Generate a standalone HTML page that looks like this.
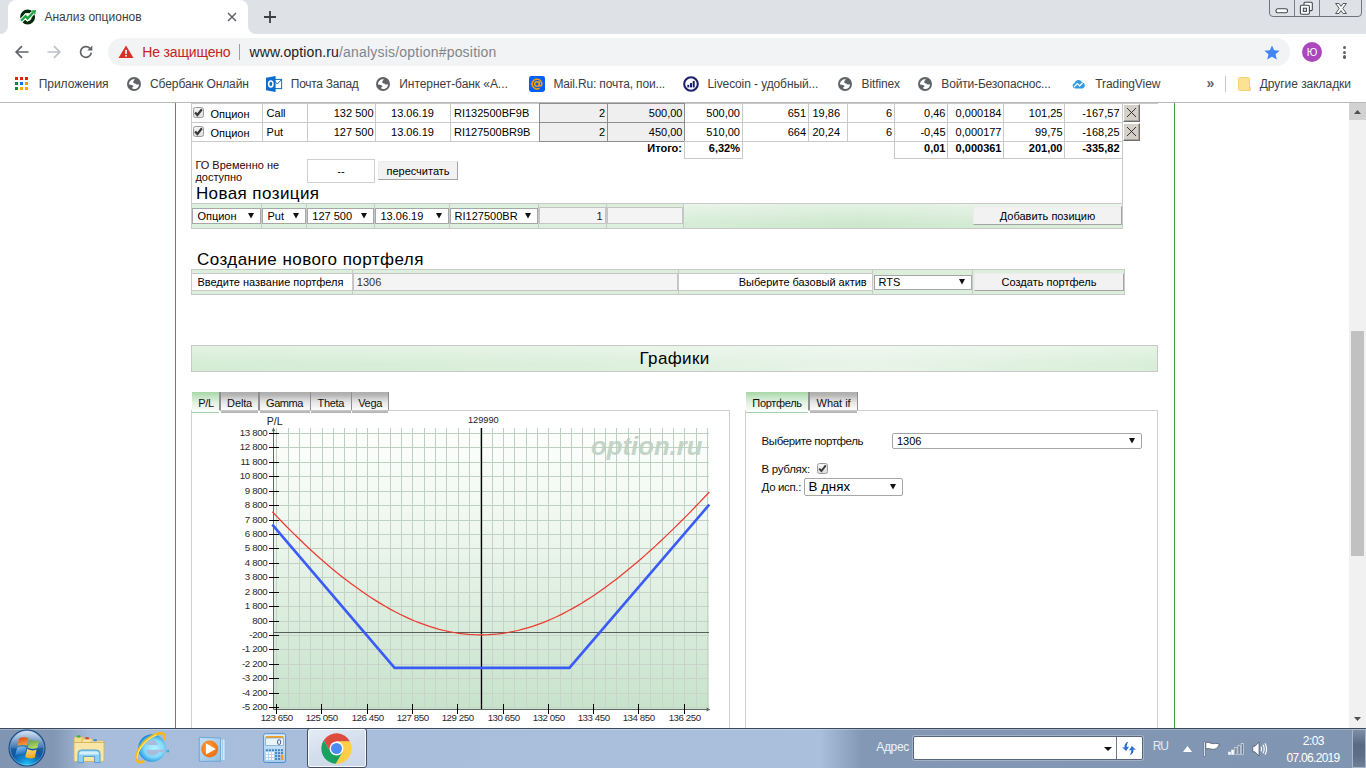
<!DOCTYPE html>
<html lang="ru"><head><meta charset="utf-8"><title>Анализ опционов</title>
<style>
*{box-sizing:border-box;margin:0;padding:0}
html,body{width:1366px;height:768px;overflow:hidden;background:#fff;font-family:"Liberation Sans",sans-serif;}
.a{position:absolute}
#root{position:relative;width:1366px;height:768px;overflow:hidden;background:#fff}
.t{position:absolute;white-space:nowrap;font-family:"Liberation Sans",sans-serif;color:#000}
.r{text-align:right}
.c{text-align:center}
.b{font-weight:bold}
svg{position:absolute;overflow:visible}
/* chrome */
#tabstrip{left:0;top:0;width:1366px;height:34px;background:#dee1e6}
#tab{left:8px;top:0;width:240px;height:34px;background:#fff;border-radius:8px 8px 0 0}
#toolbar{left:0;top:34px;width:1366px;height:68px;background:#fff}
#omni{left:108px;top:38px;width:1182px;height:28px;border-radius:14px;background:#f1f3f4}
#tbline{left:0;top:102px;width:1366px;height:1px;background:#b9b9b9}
.ui{color:#3c4043}
.cb{width:11px;height:11px;border:1px solid #9a9a9a;border-radius:2.5px;background:linear-gradient(180deg,#f6f6f6,#dedede)}
.xb{width:17px;height:18px;background:#d4d0c8;border:1px solid;border-color:#fff #6e6e6e #6e6e6e #fff;box-shadow:inset -1px -1px 0 #a8a49c}
.btn{background:#f2f2f2;border:1px solid;border-color:#ececec #a4a4a4 #a4a4a4 #ececec}
</style></head><body><div id="root">
<!-- ===== page content ===== -->
<div id="page" class="a" style="left:0;top:0;width:1349px;height:728px;overflow:hidden;background:#fff">
<div class="a" style="left:175px;top:103px;width:1px;height:625px;background:#3d9f40"></div>
<div class="a" style="left:1174px;top:103px;width:1px;height:625px;background:#3d9f40"></div>
<div class="a" style="left:191px;top:103px;width:1px;height:126px;background:#c9c9c9"></div>
<div class="a" style="left:1122px;top:103px;width:1px;height:101px;background:#c9c9c9"></div>
<div class="a" style="left:191px;top:103px;width:967px;height:1px;background:#c9c9c9"></div>
<div class="a" style="left:191px;top:122px;width:932px;height:1px;background:#c9c9c9"></div>
<div class="a" style="left:191px;top:141px;width:932px;height:1px;background:#c9c9c9"></div>
<div class="a" style="left:262px;top:103px;width:1px;height:39px;background:#c9c9c9"></div>
<div class="a" style="left:307px;top:103px;width:1px;height:39px;background:#c9c9c9"></div>
<div class="a" style="left:375px;top:103px;width:1px;height:39px;background:#c9c9c9"></div>
<div class="a" style="left:450px;top:103px;width:1px;height:39px;background:#c9c9c9"></div>
<div class="a" style="left:539px;top:103px;width:1px;height:39px;background:#c9c9c9"></div>
<div class="a" style="left:607px;top:103px;width:1px;height:39px;background:#c9c9c9"></div>
<div class="a" style="left:684px;top:103px;width:1px;height:39px;background:#c9c9c9"></div>
<div class="a" style="left:742px;top:103px;width:1px;height:39px;background:#c9c9c9"></div>
<div class="a" style="left:808px;top:103px;width:1px;height:39px;background:#c9c9c9"></div>
<div class="a" style="left:847px;top:103px;width:1px;height:39px;background:#c9c9c9"></div>
<div class="a" style="left:894px;top:103px;width:1px;height:39px;background:#c9c9c9"></div>
<div class="a" style="left:947px;top:103px;width:1px;height:39px;background:#c9c9c9"></div>
<div class="a" style="left:1003px;top:103px;width:1px;height:39px;background:#c9c9c9"></div>
<div class="a" style="left:1064px;top:103px;width:1px;height:39px;background:#c9c9c9"></div>
<div class="a" style="left:539px;top:103px;width:69px;height:20px;background:#efefef;border:1px solid #8e8e8e"></div>
<div class="a" style="left:607px;top:103px;width:78px;height:20px;background:#efefef;border:1px solid #8e8e8e"></div>
<div class="a" style="left:539px;top:122px;width:69px;height:20px;background:#efefef;border:1px solid #8e8e8e"></div>
<div class="a" style="left:607px;top:122px;width:78px;height:20px;background:#efefef;border:1px solid #8e8e8e"></div>
<div class="a" style="left:684px;top:141px;width:59px;height:18px;border:1px solid #c9c9c9;border-top:none"></div>
<div class="a" style="left:894px;top:141px;width:54px;height:18px;border:1px solid #c9c9c9;border-top:none"></div>
<div class="a" style="left:947px;top:141px;width:57px;height:18px;border:1px solid #c9c9c9;border-top:none"></div>
<div class="a" style="left:1003px;top:141px;width:62px;height:18px;border:1px solid #c9c9c9;border-top:none"></div>
<div class="a" style="left:1064px;top:141px;width:59px;height:18px;border:1px solid #c9c9c9;border-top:none"></div>
<div class="a" style="left:894px;top:158px;width:229px;height:1px;background:#c9c9c9"></div>
<div class="a cb" style="left:192.5px;top:107px"></div>
<svg style="left:194px;top:108.3px" width="9" height="9" viewBox="0 0 9 9"><path d="M1.1 4.4 L3.4 7 L7.9 1.3" fill="none" stroke="#383838" stroke-width="2.2"/></svg>
<div class="t " style="top:109.19px;font-size:11px;line-height:11px;left:210.4px;">Опцион</div>
<div class="t " style="top:108.39px;font-size:11px;line-height:11px;left:266.6px;">Call</div>
<div class="t r" style="top:108.39px;font-size:11px;line-height:11px;left:307px;width:66.5px;">132 500</div>
<div class="t c" style="top:108.39px;font-size:11px;line-height:11px;left:375px;width:75px;">13.06.19</div>
<div class="t " style="top:108.39px;font-size:11px;line-height:11px;left:454px;">RI132500BF9B</div>
<div class="t r" style="top:108.39px;font-size:11px;line-height:11px;left:539px;width:66px;">2</div>
<div class="t r" style="top:108.39px;font-size:11px;line-height:11px;left:607px;width:75.5px;">500,00</div>
<div class="t r" style="top:108.39px;font-size:11px;line-height:11px;left:684px;width:56px;">500,00</div>
<div class="t r" style="top:108.39px;font-size:11px;line-height:11px;left:742px;width:64px;">651</div>
<div class="t " style="top:108.39px;font-size:11px;line-height:11px;left:812.5px;">19,86</div>
<div class="t r" style="top:108.39px;font-size:11px;line-height:11px;left:847px;width:45px;">6</div>
<div class="t r" style="top:108.39px;font-size:11px;line-height:11px;left:894px;width:51.5px;">0,46</div>
<div class="t r" style="top:108.39px;font-size:11px;line-height:11px;left:947px;width:54.5px;">0,000184</div>
<div class="t r" style="top:108.39px;font-size:11px;line-height:11px;left:1003px;width:59.5px;">101,25</div>
<div class="t r" style="top:108.39px;font-size:11px;line-height:11px;left:1064px;width:55.5px;">-167,57</div>
<div class="a xb" style="left:1123px;top:104px"></div>
<svg style="left:1127px;top:108px" width="9" height="9" viewBox="0 0 9 9"><path d="M0 0 L9 9 M9 0 L0 9" stroke="#222" stroke-width="0.9" fill="none"/></svg>
<div class="a cb" style="left:192.5px;top:126px"></div>
<svg style="left:194px;top:127.3px" width="9" height="9" viewBox="0 0 9 9"><path d="M1.1 4.4 L3.4 7 L7.9 1.3" fill="none" stroke="#383838" stroke-width="2.2"/></svg>
<div class="t " style="top:128.09px;font-size:11px;line-height:11px;left:210.4px;">Опцион</div>
<div class="t " style="top:127.29px;font-size:11px;line-height:11px;left:266.6px;">Put</div>
<div class="t r" style="top:127.29px;font-size:11px;line-height:11px;left:307px;width:66.5px;">127 500</div>
<div class="t c" style="top:127.29px;font-size:11px;line-height:11px;left:375px;width:75px;">13.06.19</div>
<div class="t " style="top:127.29px;font-size:11px;line-height:11px;left:454px;">RI127500BR9B</div>
<div class="t r" style="top:127.29px;font-size:11px;line-height:11px;left:539px;width:66px;">2</div>
<div class="t r" style="top:127.29px;font-size:11px;line-height:11px;left:607px;width:75.5px;">450,00</div>
<div class="t r" style="top:127.29px;font-size:11px;line-height:11px;left:684px;width:56px;">510,00</div>
<div class="t r" style="top:127.29px;font-size:11px;line-height:11px;left:742px;width:64px;">664</div>
<div class="t " style="top:127.29px;font-size:11px;line-height:11px;left:812.5px;">20,24</div>
<div class="t r" style="top:127.29px;font-size:11px;line-height:11px;left:847px;width:45px;">6</div>
<div class="t r" style="top:127.29px;font-size:11px;line-height:11px;left:894px;width:51.5px;">-0,45</div>
<div class="t r" style="top:127.29px;font-size:11px;line-height:11px;left:947px;width:54.5px;">0,000177</div>
<div class="t r" style="top:127.29px;font-size:11px;line-height:11px;left:1003px;width:59.5px;">99,75</div>
<div class="t r" style="top:127.29px;font-size:11px;line-height:11px;left:1064px;width:55.5px;">-168,25</div>
<div class="a xb" style="left:1123px;top:123px"></div>
<svg style="left:1127px;top:127px" width="9" height="9" viewBox="0 0 9 9"><path d="M0 0 L9 9 M9 0 L0 9" stroke="#222" stroke-width="0.9" fill="none"/></svg>
<div class="t r b" style="top:142.89px;font-size:11px;line-height:11px;left:607px;width:75px;">Итого:</div>
<div class="t r b" style="top:142.89px;font-size:11px;line-height:11px;left:684px;width:56px;">6,32%</div>
<div class="t r b" style="top:142.89px;font-size:11px;line-height:11px;left:894px;width:51.5px;">0,01</div>
<div class="t r b" style="top:142.89px;font-size:11px;line-height:11px;left:947px;width:54.5px;">0,000361</div>
<div class="t r b" style="top:142.89px;font-size:11px;line-height:11px;left:1003px;width:59.5px;">201,00</div>
<div class="t r b" style="top:142.89px;font-size:11px;line-height:11px;left:1064px;width:55.5px;">-335,82</div>
<div class="t " style="top:160.09px;font-size:11px;line-height:11px;left:195.4px;color:#2e0606;">ГО Временно не</div>
<div class="t " style="top:172.29px;font-size:11px;line-height:11px;left:195.4px;color:#2e0606;">доступно</div>
<div class="a" style="left:307px;top:159px;width:68px;height:24px;border:1px solid #cfcfcf;background:#fff"></div>
<div class="t c" style="top:166.29px;font-size:11px;line-height:11px;left:307px;width:68px;">--</div>
<div class="a btn" style="left:378px;top:161px;width:80px;height:19px"></div>
<div class="t c" style="top:165.69px;font-size:11px;line-height:11px;left:378px;width:80px;">пересчитать</div>
<div class="t" style="letter-spacing:0.419px;left:195.9px;top:185.1px;font-size:17px;line-height:17px">Новая позиция</div>
<div class="t" style="letter-spacing:0.447px;left:197px;top:250.5px;font-size:17px;line-height:17px">Создание нового портфеля</div>
<div class="a" style="left:191px;top:203px;width:932px;height:26px;background:#dceedc;border-top:1px solid #c9c9c9;border-bottom:1px solid #c9c9c9"></div>
<div class="a" style="left:684px;top:204px;width:438px;height:24px;background:linear-gradient(180deg,rgba(255,255,255,0.45) 0%,rgba(255,255,255,0) 85%),linear-gradient(90deg,#d6ecd6 0%,#cde7cd 40%,#d6ecd6 75%,#dcefdc 100%)"></div>
<div class="a" style="left:261px;top:203px;width:1px;height:26px;background:#c9c9c9"></div>
<div class="a" style="left:306px;top:203px;width:1px;height:26px;background:#c9c9c9"></div>
<div class="a" style="left:374px;top:203px;width:1px;height:26px;background:#c9c9c9"></div>
<div class="a" style="left:449px;top:203px;width:1px;height:26px;background:#c9c9c9"></div>
<div class="a" style="left:538px;top:203px;width:1px;height:26px;background:#c9c9c9"></div>
<div class="a" style="left:606px;top:203px;width:1px;height:26px;background:#c9c9c9"></div>
<div class="a" style="left:683px;top:203px;width:1px;height:26px;background:#c9c9c9"></div>
<div class="a" style="left:191px;top:203px;width:1px;height:26px;background:#c9c9c9"></div>
<div class="a" style="left:1122px;top:203px;width:1px;height:26px;background:#c9c9c9"></div>
<div class="a" style="left:192px;top:208px;width:69px;height:16px;background:#fff;border:1px solid #a6a6a6;border-radius:0px"></div>
<div class="t " style="top:211.49px;font-size:11px;line-height:11px;left:197.4px;">Опцион</div>
<svg style="left:248.3px;top:212.8px" width="6" height="5.5" viewBox="0 0 6 5.5"><path d="M0 0 H6 L3 5.5 Z" fill="#111"/></svg>
<div class="a" style="left:262px;top:208px;width:44px;height:16px;background:#fff;border:1px solid #a6a6a6;border-radius:0px"></div>
<div class="t " style="top:211.49px;font-size:11px;line-height:11px;left:267.5px;">Put</div>
<svg style="left:293.3px;top:212.8px" width="6" height="5.5" viewBox="0 0 6 5.5"><path d="M0 0 H6 L3 5.5 Z" fill="#111"/></svg>
<div class="a" style="left:307px;top:208px;width:67px;height:16px;background:#fff;border:1px solid #a6a6a6;border-radius:0px"></div>
<div class="t " style="top:211.49px;font-size:11px;line-height:11px;left:312.3px;">127 500</div>
<svg style="left:361.3px;top:212.8px" width="6" height="5.5" viewBox="0 0 6 5.5"><path d="M0 0 H6 L3 5.5 Z" fill="#111"/></svg>
<div class="a" style="left:375px;top:208px;width:74px;height:16px;background:#fff;border:1px solid #a6a6a6;border-radius:0px"></div>
<div class="t " style="top:211.49px;font-size:11px;line-height:11px;left:380.5px;">13.06.19</div>
<svg style="left:436.3px;top:212.8px" width="6" height="5.5" viewBox="0 0 6 5.5"><path d="M0 0 H6 L3 5.5 Z" fill="#111"/></svg>
<div class="a" style="left:450px;top:208px;width:88px;height:16px;background:#fff;border:1px solid #a6a6a6;border-radius:0px"></div>
<div class="t " style="top:211.49px;font-size:11px;line-height:11px;left:454.6px;">RI127500BR</div>
<svg style="left:525.3px;top:212.8px" width="6" height="5.5" viewBox="0 0 6 5.5"><path d="M0 0 H6 L3 5.5 Z" fill="#111"/></svg>
<div class="a" style="left:539px;top:207px;width:67px;height:17px;background:#f4f4f4;border:1px solid #c4c4c4"></div>
<div class="t r" style="top:211.09px;font-size:11px;line-height:11px;left:539px;width:63.5px;color:#222;">1</div>
<div class="a" style="left:607px;top:207px;width:76px;height:17px;background:#f4f4f4;border:1px solid #c4c4c4"></div>
<div class="a btn" style="left:973px;top:206px;width:149px;height:19px"></div>
<div class="t c" style="top:211.29px;font-size:11px;line-height:11px;left:973px;width:149px;">Добавить позицию</div>
<div class="a" style="left:191px;top:269px;width:934px;height:26px;background:#dceedc;border:1px solid #c9c9c9"></div>
<div class="a" style="left:352px;top:269px;width:1px;height:26px;background:#c9c9c9"></div>
<div class="a" style="left:678px;top:269px;width:1px;height:26px;background:#c9c9c9"></div>
<div class="a" style="left:872px;top:269px;width:1px;height:26px;background:#c9c9c9"></div>
<div class="a" style="left:972px;top:269px;width:1px;height:26px;background:#c9c9c9"></div>
<div class="a" style="left:192px;top:273px;width:160px;height:18px;background:#fff;border-top:1px solid #c9c9c9;border-bottom:1px solid #c9c9c9"></div>
<div class="t " style="top:277.09px;font-size:11px;line-height:11px;left:197.4px;">Введите название портфеля</div>
<div class="a" style="left:353px;top:273px;width:325px;height:18px;background:#f4f4f4;border:1px solid #c4c4c4"></div>
<div class="t " style="top:277.09px;font-size:11px;line-height:11px;left:356.8px;color:#333;">1306</div>
<div class="a" style="left:679px;top:273px;width:193px;height:18px;background:#fff;border-top:1px solid #c9c9c9;border-bottom:1px solid #c9c9c9"></div>
<div class="t r" style="top:277.09px;font-size:11px;line-height:11px;left:679px;width:187.7px;">Выберите базовый актив</div>
<div class="a" style="left:874px;top:275px;width:98px;height:15px;background:#fff;border:1px solid #a6a6a6;border-radius:0px"></div>
<div class="t " style="top:277.09px;font-size:11px;line-height:11px;left:878.5px;">RTS</div>
<svg style="left:959.3px;top:279.4px" width="6" height="5.5" viewBox="0 0 6 5.5"><path d="M0 0 H6 L3 5.5 Z" fill="#111"/></svg>
<div class="a btn" style="left:974px;top:273px;width:150px;height:18px"></div>
<div class="t c" style="top:277.29px;font-size:11px;line-height:11px;left:974px;width:150px;">Создать портфель</div>
<div class="a" style="left:191px;top:345px;width:967px;height:27px;background:linear-gradient(180deg,rgba(255,255,255,0.35) 0%,rgba(255,255,255,0) 70%),linear-gradient(90deg,#d5ecd5 0%,#dcefdc 40%,#e8f4e8 70%,#d9eed9 100%);border:1px solid #c6c9c6"></div>
<div class="t c" style="left:191px;width:967px;top:350px;font-size:17px;line-height:17px;letter-spacing:0.35px">Графики</div>
<div class="a" style="left:191px;top:410px;width:539px;height:330px;border:1px solid #d0d0d0;background:#fff"></div>
<div class="a" style="left:745px;top:410px;width:413px;height:330px;border:1px solid #d0d0d0;background:#fff"></div>
<div class="a" style="left:191.6px;top:392px;width:27.400000000000006px;height:19px;background:linear-gradient(180deg,#a6d7a6 0%,#c4e4c4 25%,#e4f3e4 60%,#f6fbf6 100%)"></div>
<div class="a" style="left:191.6px;top:410.3px;width:27.400000000000006px;height:1.2px;background:#fff"></div>
<div class="a" style="left:191.6px;top:411.5px;width:27.400000000000006px;height:1.4px;background:#a5d6a7"></div>
<div class="t" style="letter-spacing:-0.339px;left:198.3px;top:398px;font-size:11px;line-height:11px;color:#111">P/L</div>
<div class="a" style="left:221px;top:392px;width:37px;height:18.4px;background:linear-gradient(180deg,#adadad 0%,#b6b6b6 18%,#d2d2d2 38%,#e6e6e6 58%,#f4f4f4 85%,#fbfbfb 100%)"></div>
<div class="a" style="left:221px;top:410.3px;width:37px;height:2.6px;background:linear-gradient(180deg,#cacaca,#b0b0b0)"></div>
<div class="t" style="letter-spacing:-0.138px;left:227.1px;top:398px;font-size:11px;line-height:11px;color:#111">Delta</div>
<div class="a" style="left:260px;top:392px;width:49.5px;height:18.4px;background:linear-gradient(180deg,#adadad 0%,#b6b6b6 18%,#d2d2d2 38%,#e6e6e6 58%,#f4f4f4 85%,#fbfbfb 100%)"></div>
<div class="a" style="left:260px;top:410.3px;width:49.5px;height:2.6px;background:linear-gradient(180deg,#cacaca,#b0b0b0)"></div>
<div class="t" style="letter-spacing:-0.425px;left:266px;top:398px;font-size:11px;line-height:11px;color:#111">Gamma</div>
<div class="a" style="left:311px;top:392px;width:39.5px;height:18.4px;background:linear-gradient(180deg,#adadad 0%,#b6b6b6 18%,#d2d2d2 38%,#e6e6e6 58%,#f4f4f4 85%,#fbfbfb 100%)"></div>
<div class="a" style="left:311px;top:410.3px;width:39.5px;height:2.6px;background:linear-gradient(180deg,#cacaca,#b0b0b0)"></div>
<div class="t" style="letter-spacing:-0.308px;left:317.6px;top:398px;font-size:11px;line-height:11px;color:#111">Theta</div>
<div class="a" style="left:352px;top:392px;width:36px;height:18.4px;background:linear-gradient(180deg,#adadad 0%,#b6b6b6 18%,#d2d2d2 38%,#e6e6e6 58%,#f4f4f4 85%,#fbfbfb 100%)"></div>
<div class="a" style="left:352px;top:410.3px;width:36px;height:2.6px;background:linear-gradient(180deg,#cacaca,#b0b0b0)"></div>
<div class="t" style="letter-spacing:-0.323px;left:358.2px;top:398px;font-size:11px;line-height:11px;color:#111">Vega</div>
<div class="a" style="left:219.2px;top:392.3px;width:1.6000000000000227px;height:18.2px;background:#8f8f91"></div>
<div class="a" style="left:258.2px;top:392.3px;width:1.6000000000000227px;height:18.2px;background:#8f8f91"></div>
<div class="a" style="left:309.6px;top:392.3px;width:1.3999999999999773px;height:18.2px;background:#8f8f91"></div>
<div class="a" style="left:350.6px;top:392.3px;width:1.3999999999999773px;height:18.2px;background:#8f8f91"></div>
<div class="a" style="left:388px;top:392.3px;width:1.3999999999999773px;height:18.2px;background:#8f8f91"></div>
<div class="a" style="left:745.7px;top:392px;width:62.59999999999991px;height:19px;background:linear-gradient(180deg,#a6d7a6 0%,#c4e4c4 25%,#e4f3e4 60%,#f6fbf6 100%)"></div>
<div class="a" style="left:745.7px;top:410.3px;width:62.59999999999991px;height:1.2px;background:#fff"></div>
<div class="a" style="left:745.7px;top:411.5px;width:62.59999999999991px;height:1.4px;background:#a5d6a7"></div>
<div class="t" style="letter-spacing:-0.311px;left:752.3px;top:398px;font-size:11px;line-height:11px;color:#111">Портфель</div>
<div class="a" style="left:810px;top:392px;width:47px;height:18.4px;background:linear-gradient(180deg,#adadad 0%,#b6b6b6 18%,#d2d2d2 38%,#e6e6e6 58%,#f4f4f4 85%,#fbfbfb 100%)"></div>
<div class="a" style="left:810px;top:410.3px;width:47px;height:2.6px;background:linear-gradient(180deg,#cacaca,#b0b0b0)"></div>
<div class="t" style="letter-spacing:-0.033px;left:816.6px;top:398px;font-size:11px;line-height:11px;color:#111">What if</div>
<div class="a" style="left:808.4px;top:392.3px;width:1.5px;height:18.2px;background:#8f8f91"></div>
<div class="a" style="left:857px;top:392.3px;width:1.3999999999999773px;height:18.2px;background:#8f8f91"></div>
<div class="t" style="letter-spacing:-0.415px;left:761.6px;top:435.4px;font-size:11.5px;line-height:12px;color:#111">Выберите портфель</div>
<div class="a" style="left:892px;top:433px;width:250px;height:16px;background:#fff;border:1px solid #a6a6a6;border-radius:2px"></div>
<div class="t " style="top:435.69px;font-size:11px;line-height:11px;left:897px;">1306</div>
<svg style="left:1129px;top:437.9px" width="6" height="5.5" viewBox="0 0 6 5.5"><path d="M0 0 H6 L3 5.5 Z" fill="#111"/></svg>
<div class="t" style="letter-spacing:-0.308px;left:761.6px;top:462.6px;font-size:11.5px;line-height:12px;color:#111">В рублях:</div>
<div class="a cb" style="left:816.5px;top:462.5px"></div>
<svg style="left:818px;top:464px" width="9" height="9" viewBox="0 0 9 9"><path d="M1.2 4.6 L3.4 7 L7.8 1.4" fill="none" stroke="#3a3a3a" stroke-width="1.9"/></svg>
<div class="t" style="letter-spacing:-0.364px;left:761.6px;top:481.2px;font-size:11.5px;line-height:12px;color:#111">До исп.:</div>
<div class="a" style="left:804px;top:478px;width:99px;height:18px;background:#fff;border:1px solid #a6a6a6;border-radius:2px"></div>
<div class="t " style="top:480.32px;font-size:13.33px;line-height:13.33px;left:808.5px;">В днях</div>
<svg style="left:890px;top:483.9px" width="6" height="5.5" viewBox="0 0 6 5.5"><path d="M0 0 H6 L3 5.5 Z" fill="#111"/></svg>
<!-- ===== chart ===== -->
<div class="a" style="left:274px;top:428px;width:435px;height:281px;background:linear-gradient(180deg,#fdfefd 0%,#eff7f0 35%,#dcedde 65%,#c7e3cb 100%)"></div>
<svg style="left:0;top:0" width="1349" height="728" viewBox="0 0 1349 728">
<text x="591" y="455.2" font-family="Liberation Sans, sans-serif" font-size="25.6" font-weight="bold" font-style="italic" fill="#c4d4c8" textLength="111.5" lengthAdjust="spacingAndGlyphs">option.ru</text>
<defs><linearGradient id="gridg" gradientUnits="userSpaceOnUse" x1="0" y1="428" x2="0" y2="709"><stop offset="0" stop-color="#bbd0bf"/><stop offset="0.5" stop-color="#c2d3c5"/><stop offset="1" stop-color="#cbd4cc"/></linearGradient></defs>
<path d="M276.5 428V709M288.5 428V709M299.5 428V709M310.5 428V709M322.5 428V709M333.5 428V709M344.5 428V709M356.5 428V709M367.5 428V709M378.5 428V709M390.5 428V709M401.5 428V709M412.5 428V709M424.5 428V709M435.5 428V709M446.5 428V709M458.5 428V709M469.5 428V709M480.5 428V709M492.5 428V709M503.5 428V709M514.5 428V709M526.5 428V709M537.5 428V709M548.5 428V709M560.5 428V709M571.5 428V709M582.5 428V709M594.5 428V709M605.5 428V709M616.5 428V709M628.5 428V709M639.5 428V709M650.5 428V709M662.5 428V709M673.5 428V709M684.5 428V709M696.5 428V709M707.5 428V709M274 433.5H709M274 447.5H709M274 462.5H709M274 476.5H709M274 491.5H709M274 505.5H709M274 520.5H709M274 534.5H709M274 548.5H709M274 563.5H709M274 577.5H709M274 592.5H709M274 606.5H709M274 621.5H709M274 635.5H709M274 649.5H709M274 664.5H709M274 678.5H709M274 693.5H709M274 707.5H709" stroke="url(#gridg)" stroke-width="1" fill="none"/>
<path d="M274 632.5H709" stroke="#55605a" stroke-width="1"/>
<path d="M273.5 428V709.5H709" stroke="#5c6b62" stroke-width="1" fill="none"/>
<path d="M271.6 431.2L273.5 427.6L275.4 431.2Z M706.6 707.6L710.4 709.5L706.6 711.4Z" fill="#5c6b62"/>
<path d="M269 433.5H279M269 447.5H279M269 462.5H279M269 476.5H279M269 491.5H279M269 505.5H279M269 520.5H279M269 534.5H279M269 548.5H279M269 563.5H279M269 577.5H279M269 592.5H279M269 606.5H279M269 621.5H279M269 635.5H279M269 649.5H279M269 664.5H279M269 678.5H279M269 693.5H279M269 707.5H279M276.5 704V714M321.5 704V714M367.5 704V714M412.5 704V714M457.5 704V714M503.5 704V714M548.5 704V714M593.5 704V714M638.5 704V714M684.5 704V714" stroke="#000" stroke-width="1" fill="none"/>
<path d="M481.5 428V709" stroke="#000" stroke-width="1.3"/>
<path d="M272.3 511.7 L277.2 516.9 L282.1 522.0 L287.0 527.0 L291.9 531.9 L296.9 536.8 L301.8 541.5 L306.7 546.2 L311.6 550.7 L316.5 555.2 L321.4 559.5 L326.3 563.8 L331.2 567.9 L336.1 572.0 L341.0 575.9 L346.0 579.8 L350.9 583.5 L355.8 587.1 L360.7 590.6 L365.6 594.0 L370.5 597.3 L375.4 600.4 L380.3 603.4 L385.2 606.3 L390.1 609.1 L395.1 611.8 L400.0 614.3 L404.9 616.6 L409.8 618.9 L414.7 621.0 L419.6 622.9 L424.5 624.7 L429.4 626.4 L434.3 627.9 L439.2 629.3 L444.2 630.5 L449.1 631.6 L454.0 632.5 L458.9 633.3 L463.8 633.9 L468.7 634.4 L473.6 634.7 L478.5 634.8 L483.4 634.8 L488.3 634.7 L493.3 634.3 L498.2 633.9 L503.1 633.3 L508.0 632.5 L512.9 631.5 L517.8 630.5 L522.7 629.2 L527.6 627.8 L532.5 626.3 L537.4 624.6 L542.4 622.8 L547.3 620.8 L552.2 618.7 L557.1 616.5 L562.0 614.1 L566.9 611.5 L571.8 608.9 L576.7 606.1 L581.6 603.2 L586.5 600.1 L591.5 597.0 L596.4 593.7 L601.3 590.3 L606.2 586.8 L611.1 583.1 L616.0 579.4 L620.9 575.6 L625.8 571.6 L630.7 567.6 L635.6 563.5 L640.6 559.2 L645.5 554.9 L650.4 550.5 L655.3 546.1 L660.2 541.5 L665.1 536.9 L670.0 532.1 L674.9 527.4 L679.8 522.5 L684.7 517.6 L689.7 512.6 L694.6 507.5 L699.5 502.4 L704.4 497.2 L709.3 492.0" stroke="#ee3a30" stroke-width="1.25" fill="none"/>
<path d="M272.3 524.6 L394.6 667.9 L569.4 667.9 L709.3 504.6" stroke="#3a5bf7" stroke-width="2.6" fill="none" stroke-linejoin="miter"/>
</svg>
<div class="t " style="top:416.43px;font-size:10.6px;line-height:10.6px;left:266.8px;color:#222;">P/L</div>
<div class="t c" style="top:416.41px;font-size:9.2px;line-height:9.2px;left:468px;width:30.5px;color:#222;">129990</div>
<div class="t r" style="top:428.39px;font-size:9.7px;line-height:9.7px;left:217.3px;width:50px;color:#2a2a2a;letter-spacing:-0.35px;">13 800</div>
<div class="t r" style="top:442.39px;font-size:9.7px;line-height:9.7px;left:217.3px;width:50px;color:#2a2a2a;letter-spacing:-0.35px;">12 800</div>
<div class="t r" style="top:457.39px;font-size:9.7px;line-height:9.7px;left:217.3px;width:50px;color:#2a2a2a;letter-spacing:-0.35px;">11 800</div>
<div class="t r" style="top:471.39px;font-size:9.7px;line-height:9.7px;left:217.3px;width:50px;color:#2a2a2a;letter-spacing:-0.35px;">10 800</div>
<div class="t r" style="top:486.39px;font-size:9.7px;line-height:9.7px;left:217.3px;width:50px;color:#2a2a2a;letter-spacing:-0.35px;">9 800</div>
<div class="t r" style="top:500.39px;font-size:9.7px;line-height:9.7px;left:217.3px;width:50px;color:#2a2a2a;letter-spacing:-0.35px;">8 800</div>
<div class="t r" style="top:515.39px;font-size:9.7px;line-height:9.7px;left:217.3px;width:50px;color:#2a2a2a;letter-spacing:-0.35px;">7 800</div>
<div class="t r" style="top:529.39px;font-size:9.7px;line-height:9.7px;left:217.3px;width:50px;color:#2a2a2a;letter-spacing:-0.35px;">6 800</div>
<div class="t r" style="top:543.39px;font-size:9.7px;line-height:9.7px;left:217.3px;width:50px;color:#2a2a2a;letter-spacing:-0.35px;">5 800</div>
<div class="t r" style="top:558.39px;font-size:9.7px;line-height:9.7px;left:217.3px;width:50px;color:#2a2a2a;letter-spacing:-0.35px;">4 800</div>
<div class="t r" style="top:572.39px;font-size:9.7px;line-height:9.7px;left:217.3px;width:50px;color:#2a2a2a;letter-spacing:-0.35px;">3 800</div>
<div class="t r" style="top:587.39px;font-size:9.7px;line-height:9.7px;left:217.3px;width:50px;color:#2a2a2a;letter-spacing:-0.35px;">2 800</div>
<div class="t r" style="top:601.39px;font-size:9.7px;line-height:9.7px;left:217.3px;width:50px;color:#2a2a2a;letter-spacing:-0.35px;">1 800</div>
<div class="t r" style="top:616.39px;font-size:9.7px;line-height:9.7px;left:217.3px;width:50px;color:#2a2a2a;letter-spacing:-0.35px;">800</div>
<div class="t r" style="top:630.39px;font-size:9.7px;line-height:9.7px;left:217.3px;width:50px;color:#2a2a2a;letter-spacing:-0.35px;">-200</div>
<div class="t r" style="top:644.39px;font-size:9.7px;line-height:9.7px;left:217.3px;width:50px;color:#2a2a2a;letter-spacing:-0.35px;">-1 200</div>
<div class="t r" style="top:659.39px;font-size:9.7px;line-height:9.7px;left:217.3px;width:50px;color:#2a2a2a;letter-spacing:-0.35px;">-2 200</div>
<div class="t r" style="top:673.39px;font-size:9.7px;line-height:9.7px;left:217.3px;width:50px;color:#2a2a2a;letter-spacing:-0.35px;">-3 200</div>
<div class="t r" style="top:688.39px;font-size:9.7px;line-height:9.7px;left:217.3px;width:50px;color:#2a2a2a;letter-spacing:-0.35px;">-4 200</div>
<div class="t r" style="top:702.39px;font-size:9.7px;line-height:9.7px;left:217.3px;width:50px;color:#2a2a2a;letter-spacing:-0.35px;">-5 200</div>
<div class="t c" style="top:712.69px;font-size:9.7px;line-height:9.7px;left:251.7px;width:50px;color:#2a2a2a;letter-spacing:-0.42px;">123 650</div>
<div class="t c" style="top:712.69px;font-size:9.7px;line-height:9.7px;left:296.7px;width:50px;color:#2a2a2a;letter-spacing:-0.42px;">125 050</div>
<div class="t c" style="top:712.69px;font-size:9.7px;line-height:9.7px;left:342.7px;width:50px;color:#2a2a2a;letter-spacing:-0.42px;">126 450</div>
<div class="t c" style="top:712.69px;font-size:9.7px;line-height:9.7px;left:387.7px;width:50px;color:#2a2a2a;letter-spacing:-0.42px;">127 850</div>
<div class="t c" style="top:712.69px;font-size:9.7px;line-height:9.7px;left:432.7px;width:50px;color:#2a2a2a;letter-spacing:-0.42px;">129 250</div>
<div class="t c" style="top:712.69px;font-size:9.7px;line-height:9.7px;left:478.7px;width:50px;color:#2a2a2a;letter-spacing:-0.42px;">130 650</div>
<div class="t c" style="top:712.69px;font-size:9.7px;line-height:9.7px;left:523.7px;width:50px;color:#2a2a2a;letter-spacing:-0.42px;">132 050</div>
<div class="t c" style="top:712.69px;font-size:9.7px;line-height:9.7px;left:568.7px;width:50px;color:#2a2a2a;letter-spacing:-0.42px;">133 450</div>
<div class="t c" style="top:712.69px;font-size:9.7px;line-height:9.7px;left:613.7px;width:50px;color:#2a2a2a;letter-spacing:-0.42px;">134 850</div>
<div class="t c" style="top:712.69px;font-size:9.7px;line-height:9.7px;left:659.7px;width:50px;color:#2a2a2a;letter-spacing:-0.42px;">136 250</div>
</div>
<!-- ===== browser chrome ===== -->
<div id="tabstrip" class="a"></div>
<div id="tab" class="a"></div>
<svg style="left:0;top:26px" width="8" height="8"><path d="M0 8 A8 8 0 0 0 8 0 V8 Z" fill="#fff"/></svg>
<svg style="left:248px;top:26px" width="8" height="8"><path d="M8 8 A8 8 0 0 1 0 0 V8 Z" fill="#fff"/></svg>
<!-- favicon -->
<svg style="left:20px;top:9px" width="16" height="16" viewBox="0 0 16 16">
<circle cx="7.6" cy="8" r="5.7" fill="none" stroke="#00290b" stroke-width="3.5"/>
<path d="M0.6 12.2 L5.6 7.2 L7.6 9.6 L13 3.6" fill="none" stroke="#fff" stroke-width="4.4"/>
<path d="M1 11.8 L5.6 7.2 L7.6 9.6 L13 3.6" fill="none" stroke="#18a63a" stroke-width="2.3" stroke-linejoin="miter"/>
<path d="M11.6 1.6 L16 1 L15.3 5.6 Z" fill="#18a63a"/>
</svg>
<div class="t ui" style="letter-spacing:0.023px;left:44.4px;top:11.2px;font-size:12px;line-height:12px;color:#3c4043">Анализ опционов</div>
<!-- tab close / new tab -->
<svg style="left:227px;top:12px" width="10" height="10" viewBox="0 0 10 10"><path d="M1 1 L9 9 M9 1 L1 9" stroke="#5f6368" stroke-width="1.5" fill="none"/></svg>
<svg style="left:264px;top:11px" width="12" height="12" viewBox="0 0 12 12"><path d="M6 0 V12 M0 6 H12" stroke="#3c4043" stroke-width="1.8" fill="none"/></svg>
<!-- window controls -->
<div class="a" style="left:1269px;top:-4px;width:93px;height:21px;border:1px solid #6f737b;border-radius:0 0 4px 4px;background:#dee1e6"></div>
<div class="a" style="left:1294px;top:0;width:1px;height:16px;background:#7a7e86"></div>
<div class="a" style="left:1319px;top:0;width:1px;height:16px;background:#7a7e86"></div>
<svg style="left:1275px;top:8px" width="14" height="6" viewBox="0 0 14 6"><rect x="1" y="0.8" width="11.5" height="4" rx="1.8" fill="#fff" stroke="#43464c" stroke-width="1.1"/></svg>
<svg style="left:1299px;top:1px" width="15" height="14" viewBox="0 0 15 14">
<path d="M5 4 V2.3 Q5 1.3 6 1.3 H12.3 Q13.3 1.3 13.3 2.3 V8.6 Q13.3 9.6 12.3 9.6 H10.6" fill="#fff" stroke="#43464c" stroke-width="1.1"/>
<rect x="1.4" y="4.2" width="9" height="9" rx="1.2" fill="#fff" stroke="#43464c" stroke-width="1.1"/>
<rect x="4.3" y="7.2" width="3.2" height="3.2" fill="#dee1e6" stroke="#43464c" stroke-width="1"/>
</svg>
<svg style="left:1334.5px;top:2.6px" width="12" height="11" viewBox="0 0 12 11">
<path d="M0.6 0.5 H4 L6 3.4 L8 0.5 H11.4 L7.8 5.4 L11.4 10.5 H8 L6 7.5 L4 10.5 H0.6 L4.2 5.4 Z" fill="#fff" stroke="#43464c" stroke-width="0.9" stroke-linejoin="round"/>
</svg>
<!-- toolbar -->
<div id="toolbar" class="a"></div>
<div id="omni" class="a"></div>
<svg style="left:15px;top:45px" width="14" height="14" viewBox="0 0 14 14"><path d="M13.5 7 H1.6 M7 1.2 L1.2 7 L7 12.8" stroke="#5f6368" stroke-width="1.7" fill="none"/></svg>
<svg style="left:47px;top:45px" width="14" height="14" viewBox="0 0 14 14"><path d="M0.5 7 H12.4 M7 1.2 L12.8 7 L7 12.8" stroke="#bdc1c6" stroke-width="1.7" fill="none"/></svg>
<svg style="left:79px;top:45px" width="14" height="14" viewBox="0 0 14 14"><path d="M12.3 7.6 A5.4 5.4 0 1 1 10.9 3.3" stroke="#5f6368" stroke-width="1.7" fill="none"/><path d="M13.3 0.6 V5.6 H8.3 Z" fill="#5f6368"/></svg>
<!-- not secure -->
<svg style="left:118px;top:45px" width="16" height="14" viewBox="0 0 16 14"><path d="M8 0.5 L15.5 13 H0.5 Z" fill="#d93025"/><rect x="7.2" y="4.8" width="1.6" height="4.2" fill="#fff"/><rect x="7.2" y="10" width="1.6" height="1.6" fill="#fff"/></svg>
<div class="t" style="letter-spacing:-0.164px;left:142.3px;top:45.4px;font-size:14px;line-height:14px;color:#c5221f">Не защищено</div>
<div class="a" style="left:239px;top:44px;width:1px;height:16px;background:#9aa0a6"></div>
<div class="t" style="letter-spacing:0.120px;left:249.5px;top:45.4px;font-size:14px;line-height:14px;color:#202124">www.option.ru</div>
<div class="t" style="letter-spacing:0.198px;left:339px;top:45.4px;font-size:14px;line-height:14px;color:#80868b">/analysis/option#position</div>
<!-- star, avatar, menu -->
<svg style="left:1264px;top:45px" width="16" height="15" viewBox="0 0 16 15"><path d="M8 0.4 L10.2 5.3 L15.6 5.8 L11.5 9.3 L12.8 14.5 L8 11.7 L3.2 14.5 L4.5 9.3 L0.4 5.8 L5.8 5.3 Z" fill="#4285f4"/></svg>
<div class="a" style="left:1302px;top:42px;width:20px;height:20px;border-radius:10px;background:#ab47bc"></div>
<div class="t c" style="left:1302px;width:20px;top:47px;font-size:10.5px;line-height:11px;color:#fff">Ю</div>
<div class="a" style="left:1342.5px;top:45.8px;width:3.6px;height:3.6px;border-radius:2px;background:#5f6368"></div>
<div class="a" style="left:1342.5px;top:50.6px;width:3.6px;height:3.6px;border-radius:2px;background:#5f6368"></div>
<div class="a" style="left:1342.5px;top:55.4px;width:3.6px;height:3.6px;border-radius:2px;background:#5f6368"></div>
<!-- ===== bookmarks bar ===== -->
<svg style="left:15px;top:77px" width="13" height="13" viewBox="0 0 13 13"><rect x="0" y="0" width="3" height="3" fill="#ea1d0f"/><rect x="5" y="0" width="3" height="3" fill="#ea1d0f"/><rect x="10" y="0" width="3" height="3" fill="#ea1d0f"/><rect x="0" y="5" width="3" height="3" fill="#0d8a3a"/><rect x="5" y="5" width="3" height="3" fill="#0b72f7"/><rect x="10" y="5" width="3" height="3" fill="#f09d00"/><rect x="0" y="10" width="3" height="3" fill="#0d8a3a"/><rect x="5" y="10" width="3" height="3" fill="#fcab00"/><rect x="10" y="10" width="3" height="3" fill="#fba600"/></svg>
<div class="t ui" style="letter-spacing:-0.032px;left:38.7px;top:77.8px;font-size:12px;line-height:12px">Приложения</div>
<svg style="left:127px;top:77px" width="14" height="14" viewBox="0 0 14 14"><circle cx="7" cy="7" r="7" fill="#5f6368"/><path d="M1.9 7.4 C2 4 4.6 2 7.9 2.2 L6.4 4.2 C5.8 5.5 7 6.5 8.5 6.6 C9 7.9 10.5 7.7 11.9 7.2 C12.1 10 10 12.1 7 12.1 C5.4 12.1 4.9 11 5.2 10.3 C7 10 6.6 8.5 5.5 8.2 C4.5 7.6 3 7.7 1.9 7.4 Z" fill="#fff"/></svg>
<div class="t ui" style="letter-spacing:-0.094px;left:150px;top:77.8px;font-size:12px;line-height:12px">Сбербанк Онлайн</div>
<svg style="left:266px;top:76px" width="16" height="16" viewBox="0 0 16 16"><rect x="7" y="3.4" width="8.6" height="9.2" fill="#fff" stroke="#0a6ed1" stroke-width="1"/><path d="M7.5 4 L11.3 8 L15.2 4" fill="none" stroke="#0a6ed1" stroke-width="1"/><path d="M0 1.8 L9.6 0 V16 L0 14.2 Z" fill="#0a6ed1"/><ellipse cx="4.8" cy="8" rx="2.2" ry="2.9" fill="none" stroke="#fff" stroke-width="1.5"/></svg>
<div class="t ui" style="letter-spacing:-0.270px;left:290.8px;top:77.8px;font-size:12px;line-height:12px">Почта Запад</div>
<svg style="left:376px;top:77px" width="14" height="14" viewBox="0 0 14 14"><circle cx="7" cy="7" r="7" fill="#5f6368"/><path d="M1.9 7.4 C2 4 4.6 2 7.9 2.2 L6.4 4.2 C5.8 5.5 7 6.5 8.5 6.6 C9 7.9 10.5 7.7 11.9 7.2 C12.1 10 10 12.1 7 12.1 C5.4 12.1 4.9 11 5.2 10.3 C7 10 6.6 8.5 5.5 8.2 C4.5 7.6 3 7.7 1.9 7.4 Z" fill="#fff"/></svg>
<div class="t ui" style="letter-spacing:-0.060px;left:399.3px;top:77.8px;font-size:12px;line-height:12px">Интернет-банк «А...</div>
<svg style="left:529px;top:76px" width="16" height="16" viewBox="0 0 16 16"><rect width="16" height="16" rx="2.4" fill="#005ff9"/><circle cx="8" cy="8" r="2.3" fill="none" stroke="#ff9e00" stroke-width="1.5"/><path d="M10.4 5.6 V9 C10.4 10.6 12.9 10.6 12.9 8 A4.9 4.9 0 1 0 10.6 12.2" fill="none" stroke="#ff9e00" stroke-width="1.5"/></svg>
<div class="t ui" style="letter-spacing:-0.159px;left:553.4px;top:77.8px;font-size:12px;line-height:12px">Mail.Ru: почта, пои...</div>
<svg style="left:683px;top:76px" width="16" height="16" viewBox="0 0 16 16"><circle cx="8" cy="8" r="6.8" fill="#fff" stroke="#1b1f6b" stroke-width="2.1"/><rect x="4.3" y="8.8" width="2" height="2.6" fill="#1b1f6b"/><rect x="7" y="7" width="2" height="4.4" fill="#1b1f6b"/><rect x="9.7" y="4.9" width="2" height="6.5" fill="#1b1f6b"/></svg>
<div class="t ui" style="letter-spacing:-0.096px;left:707.5px;top:77.8px;font-size:12px;line-height:12px">Livecoin - удобный...</div>
<svg style="left:838px;top:77px" width="14" height="14" viewBox="0 0 14 14"><circle cx="7" cy="7" r="7" fill="#5f6368"/><path d="M1.9 7.4 C2 4 4.6 2 7.9 2.2 L6.4 4.2 C5.8 5.5 7 6.5 8.5 6.6 C9 7.9 10.5 7.7 11.9 7.2 C12.1 10 10 12.1 7 12.1 C5.4 12.1 4.9 11 5.2 10.3 C7 10 6.6 8.5 5.5 8.2 C4.5 7.6 3 7.7 1.9 7.4 Z" fill="#fff"/></svg>
<div class="t ui" style="letter-spacing:-0.120px;left:861.6px;top:77.8px;font-size:12px;line-height:12px">Bitfinex</div>
<svg style="left:918px;top:77px" width="14" height="14" viewBox="0 0 14 14"><circle cx="7" cy="7" r="7" fill="#5f6368"/><path d="M1.9 7.4 C2 4 4.6 2 7.9 2.2 L6.4 4.2 C5.8 5.5 7 6.5 8.5 6.6 C9 7.9 10.5 7.7 11.9 7.2 C12.1 10 10 12.1 7 12.1 C5.4 12.1 4.9 11 5.2 10.3 C7 10 6.6 8.5 5.5 8.2 C4.5 7.6 3 7.7 1.9 7.4 Z" fill="#fff"/></svg>
<div class="t ui" style="letter-spacing:-0.163px;left:941.3px;top:77.8px;font-size:12px;line-height:12px">Войти-Безопаснос...</div>
<svg style="left:1072px;top:79px" width="14" height="10" viewBox="0 0 14 10"><path d="M3.2 9.4 A2.7 2.7 0 0 1 2.6 4.1 A3.9 3.9 0 0 1 9.9 3.2 A3.2 3.2 0 0 1 10.8 9.4 Z" fill="#2f9bea"/><path d="M2 8 L5.4 4.6 L7.6 6.8 L10.6 4" fill="none" stroke="#fff" stroke-width="1.3"/></svg>
<div class="t ui" style="letter-spacing:-0.095px;left:1095.3px;top:77.8px;font-size:12px;line-height:12px">TradingView</div>
<div class="t" style="left:1206.5px;top:75.5px;font-size:14px;line-height:14px;color:#5f6368;font-weight:bold">»</div>
<div class="a" style="left:1225px;top:76px;width:1px;height:16px;background:#c4c7cc"></div>
<svg style="left:1238px;top:77px" width="13" height="14" viewBox="0 0 13 14"><path d="M0.5 1.6 Q0.5 0.5 1.6 0.5 H10.4 Q11.5 0.5 11.5 1.6 V10.5 H12.5 V13.5 H1.6 Q0.5 13.5 0.5 12.4 Z" fill="#fde293" stroke="#f6c85f" stroke-width="0.8"/></svg>
<div class="t ui" style="letter-spacing:-0.044px;left:1259.7px;top:77.8px;font-size:12px;line-height:12px">Другие закладки</div>
<div id="tbline" class="a"></div>
<!-- ===== scrollbar ===== -->
<div class="a" style="left:1349px;top:103px;width:17px;height:625px;background:#f1f1f1"></div>
<div class="a" style="left:1349px;top:103px;width:17px;height:17px;background:#d2d2d2"></div>
<svg style="left:1354px;top:110px" width="7" height="4" viewBox="0 0 7 4"><path d="M0 4 L3.5 0 L7 4 Z" fill="#505050"/></svg>
<svg style="left:1354px;top:717px" width="7" height="4" viewBox="0 0 7 4"><path d="M0 0 L3.5 4 L7 0 Z" fill="#505050"/></svg>
<div class="a" style="left:1351px;top:331px;width:13px;height:225px;background:#c1c1c1"></div>
<!-- ===== windows taskbar ===== -->
<div class="a" style="left:0;top:728px;width:1366px;height:40px;background:linear-gradient(90deg,#8095b1 0px,#8297b3 54px,#a7bddb 90px,#a9bfdc 820px,#8398b4 862px,#8095b1 1366px)"></div>
<div class="a" style="left:0;top:728px;width:1366px;height:1px;background:#3d4a5e"></div>
<div class="a" style="left:0;top:729px;width:1366px;height:1px;background:rgba(255,255,255,0.28)"></div>
<!-- start orb -->
<svg style="left:8px;top:729px" width="38" height="38" viewBox="0 0 38 38">
<defs><radialGradient id="orb" cx="50%" cy="100%" r="95%"><stop offset="0" stop-color="#22d4fb"/><stop offset="0.22" stop-color="#1590d6"/><stop offset="0.5" stop-color="#0f559b"/><stop offset="0.8" stop-color="#2c68a6"/><stop offset="1" stop-color="#5d8cc0"/></radialGradient>
<linearGradient id="orbhl" x1="0" y1="0" x2="0" y2="1"><stop offset="0" stop-color="#e4eef8" stop-opacity="0.85"/><stop offset="1" stop-color="#cfe0f2" stop-opacity="0.12"/></linearGradient>
<linearGradient id="fr" x1="0" y1="0" x2="0.3" y2="1"><stop offset="0" stop-color="#e2411c"/><stop offset="1" stop-color="#f6a02a"/></linearGradient>
<linearGradient id="fg" x1="0" y1="0" x2="0.3" y2="1"><stop offset="0" stop-color="#5f9e3c"/><stop offset="1" stop-color="#b4d86a"/></linearGradient>
<linearGradient id="fb" x1="0" y1="0" x2="0.3" y2="1"><stop offset="0" stop-color="#8cc8f2"/><stop offset="1" stop-color="#1f6fc0"/></linearGradient>
<linearGradient id="fy" x1="0" y1="0" x2="0.3" y2="1"><stop offset="0" stop-color="#fde27a"/><stop offset="1" stop-color="#f7a51c"/></linearGradient></defs>
<circle cx="19" cy="19" r="18" fill="url(#orb)" stroke="#1b4c84" stroke-width="1.1"/>
<circle cx="19" cy="19" r="16.9" fill="none" stroke="#a9c6e6" stroke-opacity="0.55" stroke-width="0.8"/>
<path d="M2.6 18.5 A16.4 16.4 0 0 1 35.4 18.5 Q19 22.5 2.6 18.5 Z" fill="url(#orbhl)"/>
<path d="M10.9 9.6 Q15.4 7.2 20.6 9.1 L19.2 16.6 Q14.4 14.8 9.6 17.1 Z" fill="url(#fr)"/>
<path d="M21.3 10.4 Q26 13 31.1 10.9 L29.4 18.8 Q24.6 21 19.9 18.4 Z" fill="url(#fg)"/>
<path d="M9.2 18.8 Q13.8 16.4 18.5 18.4 L17 26.3 Q12 24.2 7 26.6 Z" fill="url(#fb)"/>
<path d="M19.3 20 Q24 22.6 28.6 20.5 L26.8 28.6 Q22 30.6 17.2 28 Z" fill="url(#fy)"/>
</svg>
<!-- explorer -->
<svg style="left:73px;top:734px" width="32" height="30" viewBox="0 0 32 30">
<path d="M1 4.5 Q1 3 2.5 3 H10 L12 5.5 H16 V9 H1 Z" fill="#f3dc8e" stroke="#cfae55" stroke-width="0.8"/>
<path d="M9 6 Q9 4.8 10.4 4.8 H19 L21 7.2 H24 V10 H9 Z" fill="#f6e4a4" stroke="#cfae55" stroke-width="0.8"/>
<path d="M18 8 Q18 6.8 19.4 6.8 H29.6 Q31 6.8 31 8 V11 H18 Z" fill="#f8ecbb" stroke="#cfae55" stroke-width="0.8"/>
<rect x="4" y="1.4" width="3.4" height="2" fill="#2fb344"/><rect x="12.4" y="3.2" width="3.4" height="2" fill="#e03a2e"/><rect x="20.4" y="5.2" width="3.4" height="2" fill="#2f8ae6"/>
<path d="M1 8.5 H31 V26 Q31 27.5 29.5 27.5 H2.5 Q1 27.5 1 26 Z" fill="#f7e6a6" stroke="#d4b25c" stroke-width="0.9"/>
<path d="M5 28.6 V19.4 Q5 16 8.6 16 H23.4 Q27 16 27 19.4 V28.6 H21.6 V22.4 H10.4 V28.6 Z" fill="#8fd0f2" stroke="#4f9fd6" stroke-width="1"/>
<path d="M6.4 19.4 Q6.4 17.4 8.6 17.4 H23.4 Q25.6 17.4 25.6 19.4 V20.4 H6.4 Z" fill="#d5effc"/>
</svg>
<!-- IE -->
<svg style="left:136px;top:731px" width="32" height="32" viewBox="0 0 32 32">
<defs><radialGradient id="ieg" cx="52%" cy="52%" r="52%"><stop offset="0" stop-color="#b9f3fe"/><stop offset="0.6" stop-color="#82daf9"/><stop offset="0.9" stop-color="#3aa6e7"/><stop offset="1" stop-color="#1f86d6"/></radialGradient></defs>
<path fill-rule="evenodd" fill="url(#ieg)" d="M16 3.2 A13.8 13.8 0 1 1 15.99 3.2 Z M10.2 14.1 C10.4 10.8 12.8 9 16 9 C19.2 9 21.6 10.8 21.8 14.1 Z M10.2 18.8 H33 V21.3 H22.6 C21.5 23.6 19.2 24.8 16 24.8 C12.6 24.8 10.4 22.4 10.2 18.8 Z"/>
<path d="M7.4 30.2 C4.6 32 1.4 31.6 0.6 28.6 C-0.2 24.6 1.6 20.4 4.4 16 C8 10.6 13.6 6 20.4 3.2 C24.4 1.6 27.6 2 28.4 4.4 C28.8 5.6 28.6 7 28.2 8.2" fill="none" stroke="#f8b90f" stroke-width="2.6" stroke-linecap="round"/>
<path d="M1.2 27 C1 23.6 2.6 20 5 16.4 C8.6 11 13.8 6.8 20.2 3.9" fill="none" stroke="#ffe680" stroke-width="1.1" stroke-linecap="round"/>
</svg>
<!-- media player -->
<svg style="left:198px;top:736px" width="28" height="27" viewBox="0 0 28 27">
<defs><linearGradient id="wmpf" x1="0" y1="0" x2="1" y2="1"><stop offset="0" stop-color="#c4e0f5"/><stop offset="1" stop-color="#8fc0e6"/></linearGradient>
<radialGradient id="wmpo" cx="40%" cy="35%" r="75%"><stop offset="0" stop-color="#fb9a3a"/><stop offset="1" stop-color="#ef6a0a"/></radialGradient></defs>
<path d="M19 2.4 L27 3 V24.4 L19 25 Z" fill="#d9ecf9" stroke="#8bb8de" stroke-width="0.7"/>
<path d="M24.6 3 V24.4 M22.6 2.8 V24.8" stroke="#8bb8de" stroke-width="0.7"/>
<path d="M1.3 1.3 L22.6 2 V25.2 L1.3 25.4 Z" fill="url(#wmpf)" stroke="#6aa3d4" stroke-width="0.9"/>
<circle cx="11.7" cy="12.9" r="8.5" fill="url(#wmpo)"/>
<path d="M7.9 7.2 L17.9 12.9 L7.9 18.6 Z" fill="#fff"/>
</svg>
<!-- calculator -->
<svg style="left:263px;top:733px" width="24" height="30" viewBox="0 0 24 30">
<defs><linearGradient id="calb" x1="0" y1="0" x2="0" y2="1"><stop offset="0" stop-color="#dcedfa"/><stop offset="1" stop-color="#a3cbec"/></linearGradient></defs>
<rect x="0.6" y="0.7" width="22" height="28.8" rx="1.8" fill="url(#calb)" stroke="#4f8fcd" stroke-width="1"/>
<rect x="2.7" y="3" width="17.7" height="2" fill="#f6a21e"/>
<rect x="2.7" y="5" width="17.7" height="7.6" fill="#eaf4fc" stroke="#6fa1cf" stroke-width="0.7"/>
<rect x="14.6" y="6.8" width="3" height="4.6" rx="1.3" fill="none" stroke="#4b5f96" stroke-width="1"/>
<rect x="2.85" y="16.20" width="2.1" height="2" fill="#3f86c8"/><rect x="5.85" y="16.20" width="2.1" height="2" fill="#3f86c8"/><rect x="8.85" y="16.20" width="2.1" height="2" fill="#3f86c8"/><rect x="11.95" y="16.20" width="2.1" height="2" fill="#3f86c8"/><rect x="14.95" y="16.20" width="2.1" height="2" fill="#3f86c8"/><rect x="17.95" y="16.20" width="2.1" height="2" fill="#3f86c8"/><rect x="2.85" y="19.10" width="2.1" height="2" fill="#fdfdfd"/><rect x="5.85" y="19.10" width="2.1" height="2" fill="#fdfdfd"/><rect x="8.85" y="19.10" width="2.1" height="2" fill="#fdfdfd"/><rect x="11.95" y="19.10" width="2.1" height="2" fill="#3f86c8"/><rect x="14.95" y="19.10" width="2.1" height="2" fill="#3f86c8"/><rect x="17.95" y="19.10" width="2.1" height="2" fill="#3f86c8"/><rect x="2.85" y="22.00" width="2.1" height="2" fill="#fdfdfd"/><rect x="5.85" y="22.00" width="2.1" height="2" fill="#fdfdfd"/><rect x="8.85" y="22.00" width="2.1" height="2" fill="#fdfdfd"/><rect x="11.95" y="22.00" width="2.1" height="2" fill="#3f86c8"/><rect x="14.95" y="22.00" width="2.1" height="2" fill="#3f86c8"/><rect x="2.85" y="24.90" width="2.1" height="2" fill="#fdfdfd"/><rect x="5.85" y="24.90" width="2.1" height="2" fill="#fdfdfd"/><rect x="8.85" y="24.90" width="2.1" height="2" fill="#fdfdfd"/><rect x="11.95" y="24.90" width="2.1" height="2" fill="#3f86c8"/><rect x="14.95" y="24.90" width="2.1" height="2" fill="#3f86c8"/><rect x="17.9" y="22" width="2.2" height="4.9" fill="#f59a12"/>
</svg>
<!-- chrome active button -->
<div class="a" style="left:307px;top:728px;width:60px;height:40px;border:1px solid #414e63;border-radius:3px;background:linear-gradient(160deg,#e4ecf6 0%,#d3deed 50%,#c9d6e8 100%);box-shadow:inset 0 0 0 1px rgba(255,255,255,0.85)"></div>
<svg style="left:321.2px;top:732.7px" width="31" height="31" viewBox="0 0 31 31">
<path d="M15.5 8.6 L29.04 8.6 A15.2 15.2 0 0 0 2.76 7.22 L9.52 18.95 Z" fill="#dd4b3e"/>
<path d="M21.48 18.95 L14.7 30.68 A15.2 15.2 0 0 0 29.04 8.6 L15.5 8.6 Z" fill="#ffce42"/>
<path d="M9.52 18.95 L2.76 7.22 A15.2 15.2 0 0 0 14.7 30.68 L21.48 18.95 Z" fill="#19a15f"/>
<circle cx="15.5" cy="15.5" r="6.9" fill="#fff"/>
<circle cx="15.5" cy="15.5" r="5.5" fill="#4c8bf5"/>
</svg>
<!-- address toolbar -->
<div class="t" style="letter-spacing:-0.292px;left:876.2px;top:741.3px;font-size:12px;line-height:12px;color:#edf2f8">Адрес</div>
<div class="a" style="left:913px;top:736px;width:230px;height:24px;background:#fff;border:1px solid #56657c;border-radius:2px;box-shadow:0 0 0 1px rgba(255,255,255,0.25)"></div>
<div class="a" style="left:1116px;top:737px;width:1px;height:22px;background:#6f7d92"></div>
<svg style="left:1104px;top:747px" width="8" height="4" viewBox="0 0 8 4"><path d="M0 0 H8 L4 4 Z" fill="#111"/></svg>
<svg style="left:1121px;top:741px" width="16" height="15" viewBox="0 0 16 15">
<path d="M7.4 0.6 C4.4 1.6 3 4 3.6 6.4 L1 6.2 L5.2 10 L8 5.6 L5.8 6 C5.6 4 6.4 2 7.4 0.6 Z" fill="#2b6fd6"/>
<path d="M8.6 14.4 C11.6 13.4 13 11 12.4 8.6 L15 8.8 L10.8 5 L8 9.4 L10.2 9 C10.4 11 9.6 13 8.6 14.4 Z" fill="#2b6fd6"/>
</svg>
<div class="t" style="letter-spacing:-1.222px;left:1152.7px;top:739.9px;font-size:12px;line-height:12px;color:#e3eaf3">RU</div>
<svg style="left:1183px;top:746px" width="9" height="6" viewBox="0 0 9 6"><path d="M0 6 L4.5 0 L9 6 Z" fill="#fff"/></svg>
<!-- flag -->
<svg style="left:1203px;top:741px" width="18" height="16" viewBox="0 0 18 16">
<rect x="0.8" y="0.6" width="1.7" height="15" rx="0.8" fill="#fff" stroke="#3f4d63" stroke-width="0.6"/>
<path d="M2.8 1.6 C6 0.2 8 3.4 11.4 2.6 C13.4 2.2 14.6 2.6 16.6 3.4 C15 5 14.4 7.6 11.6 8.2 C8.4 9 6 6.4 2.8 8 Z" fill="#fff" stroke="#3f4d63" stroke-width="0.7"/>
</svg>
<!-- signal -->
<svg style="left:1228px;top:743px" width="16" height="12" viewBox="0 0 16 12">
<g stroke="#e8eef6" stroke-width="0.6"><rect x="0.4" y="9" width="2.2" height="2.6" fill="#fff"/><rect x="3.6" y="7" width="2.2" height="4.6" fill="#fff"/><rect x="6.8" y="4.6" width="2.2" height="7" fill="#6f7d90"/><rect x="10" y="2.4" width="2.2" height="9.2" fill="#6f7d90"/><rect x="13.2" y="0.4" width="2.2" height="11.2" fill="#6f7d90"/></g>
</svg>
<!-- speaker -->
<svg style="left:1252px;top:741px" width="16" height="16" viewBox="0 0 16 16">
<path d="M0.8 5.2 H3 L7 1 V15 L3 10.8 H0.8 Z" fill="#fff" stroke="#3f4d63" stroke-width="0.7"/>
<path d="M9 5.6 Q10.4 8 9 10.4 M11 3.8 Q13.4 8 11 12.2 M13 2.2 Q16.2 8 13 13.8" fill="none" stroke="#fff" stroke-width="1.1"/>
</svg>
<div class="t" style="letter-spacing:-0.565px;left:1302.8px;top:734.6px;font-size:12px;line-height:12px;color:#fff">2:03</div>
<div class="t" style="letter-spacing:-0.686px;left:1286.4px;top:752.2px;font-size:12px;line-height:12px;color:#fff">07.06.2019</div>
<!-- show desktop -->
<div class="a" style="left:1352px;top:729px;width:14px;height:39px;border:1px solid #a9b7c9;background:linear-gradient(180deg,#7d8ea6 0%,#5a6a82 40%,#5e6e86 70%,#6f8098 100%)"></div>
</div></body></html>
